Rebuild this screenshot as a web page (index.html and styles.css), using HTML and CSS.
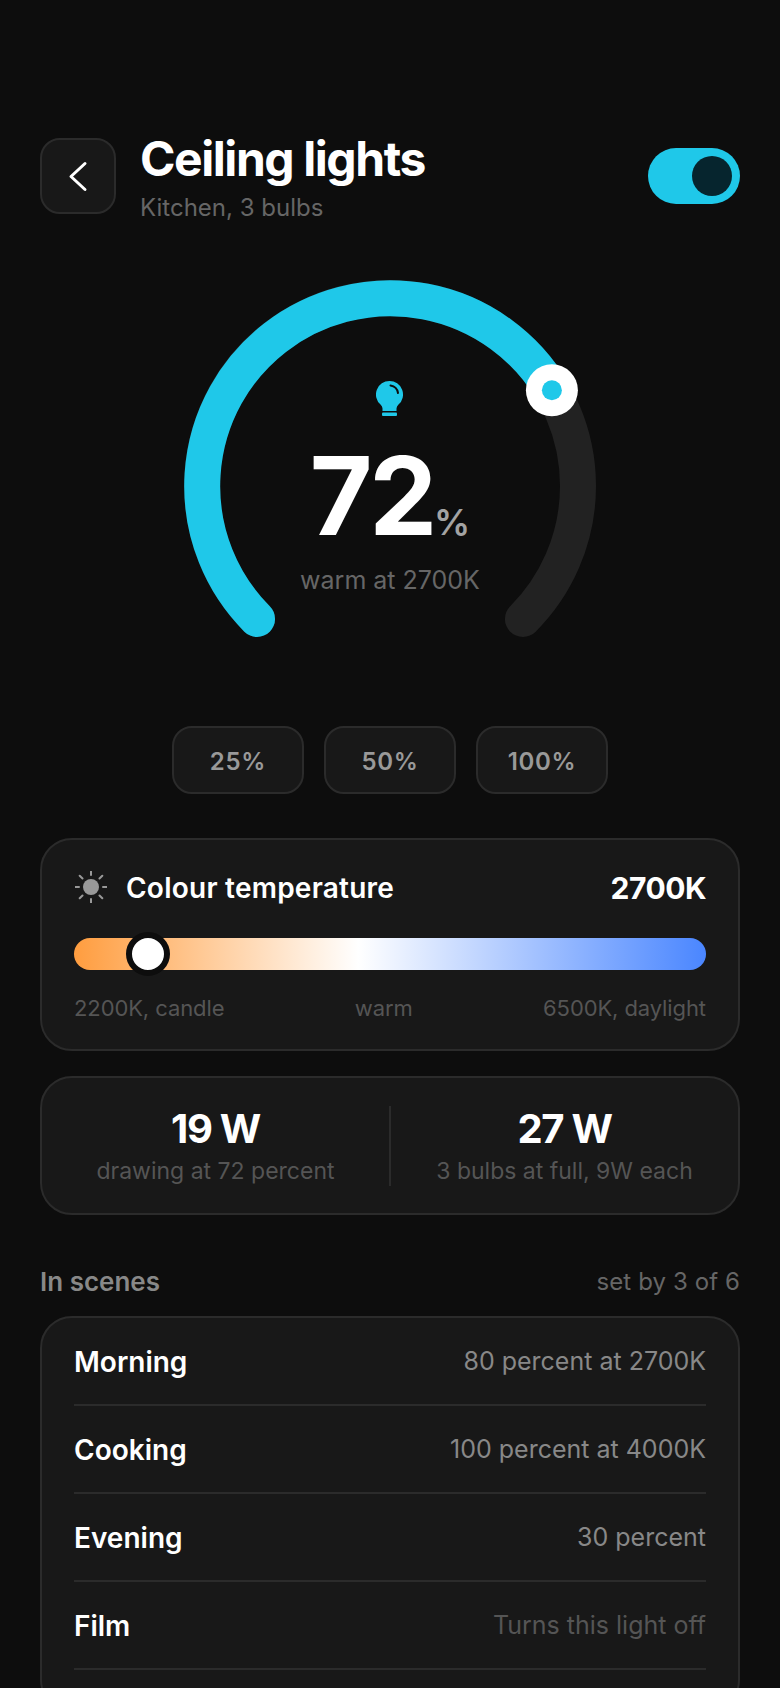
FILE: index.html
```html
<!DOCTYPE html>
<html lang="en">
<head>
<meta charset="utf-8">
<title>Ceiling lights</title>
<link rel="stylesheet" href="styles.css">
</head>
<body>
<main class="screen">
  <header class="header">
    <button class="back" aria-label="Back">
      <svg class="back-icon" viewBox="0 0 32 32"><polyline points="23,3.5 9,16.5 23,29.5"/></svg>
    </button>
    <div class="heading">
      <h1 class="title">Ceiling lights</h1>
      <p class="subtitle">Kitchen, 3 bulbs</p>
    </div>
    <div class="toggle"><span class="toggle-knob"></span></div>
  </header>

  <section class="gauge">
    <svg class="gauge-svg" viewBox="0 0 440 380">
      <path class="arc-track" d="M87.06 348.94A188 188 0 1 1 352.94 348.94"/>
      <path class="arc-value" d="M87.06 348.94A188 188 0 1 1 381.9 120.3"/>
      <circle class="knob-ring" cx="381.9" cy="120.3" r="26"/>
      <circle class="knob-dot" cx="381.9" cy="120.3" r="10"/>
    </svg>
    <div class="gauge-center">
      <svg class="bulb" viewBox="0 0 28 36">
        <path class="bulb-body" d="M13.5 0A13.5 13.5 0 0 1 22.5 23.6Q20.5 25.5 20.5 27.5V30H6.5V27.5Q6.5 25.5 4.5 23.6A13.5 13.5 0 0 1 13.5 0Z"/>
        <rect class="bulb-body" x="6" y="31.5" width="15" height="3.5" rx="1"/>
        <path class="bulb-shine" d="M14.5 4.5A9 9 0 0 1 22 12"/>
      </svg>
      <div class="reading"><span class="reading-num">72</span><span class="reading-unit">%</span></div>
      <p class="reading-note">warm at 2700K</p>
    </div>
  </section>

  <div class="chips">
    <button class="chip">25%</button>
    <button class="chip">50%</button>
    <button class="chip">100%</button>
  </div>

  <section class="card temp">
    <div class="temp-head">
      <svg class="sun" viewBox="0 0 32 32">
        <circle class="sun-core" cx="16" cy="16" r="8"/>
        <path class="sun-rays" d="M16 0V4M16 28V32M0 16H4M28 16H32M4.7 4.7L7.5 7.5M24.5 24.5L27.3 27.3M27.3 4.7L24.5 7.5M7.5 24.5L4.7 27.3"/>
      </svg>
      <h2 class="temp-title">Colour temperature</h2>
      <span class="temp-value">2700K</span>
    </div>
    <div class="temp-track"><span class="temp-handle"></span></div>
    <div class="temp-labels"><span>2200K, candle</span><span>warm</span><span>6500K, daylight</span></div>
  </section>

  <section class="card stats">
    <div class="stat"><div class="stat-value">19 W</div><div class="stat-note">drawing at 72 percent</div></div>
    <div class="stat-rule"></div>
    <div class="stat"><div class="stat-value">27 W</div><div class="stat-note">3 bulbs at full, 9W each</div></div>
  </section>

  <div class="section-head"><h2 class="section-title">In scenes</h2><span class="section-note">set by 3 of 6</span></div>
  <section class="card scenes">
    <div class="scene"><span class="scene-name">Morning</span><span class="scene-value">80 percent at 2700K</span></div>
    <div class="scene"><span class="scene-name">Cooking</span><span class="scene-value">100 percent at 4000K</span></div>
    <div class="scene"><span class="scene-name">Evening</span><span class="scene-value">30 percent</span></div>
    <div class="scene"><span class="scene-name">Film</span><span class="scene-value scene-value-off">Turns this light off</span></div>
  </section>
</main>
</body>
</html>
```
FILE: styles.css
```css
* { box-sizing: border-box; }
html, body { margin: 0; padding: 0; background: #0d0d0d; }
body { font-family: Inter, "Liberation Sans", sans-serif; color: #fff; }
h1, h2, p { margin: 0; }
button { font-family: inherit; }

.screen { width: 780px; height: 1688px; overflow: hidden; padding: 138px 40px 0; }

.header { display: flex; align-items: flex-start; height: 132px; }
.back { width: 76px; height: 76px; flex: none; padding: 0; display: flex; align-items: center; justify-content: center; background: #181818; border: 2px solid #2b2b2b; border-radius: 20px; }
.back-icon { width: 32px; height: 32px; fill: none; stroke: #fff; stroke-width: 3; stroke-linecap: round; stroke-linejoin: round; }
.heading { margin-left: 24px; flex: 1; margin-top: -7px; }
.title { font-size: 48px; line-height: 56px; font-weight: 700; letter-spacing: -1.44px; }
.subtitle { font-size: 24px; line-height: 34px; color: #666; margin-top: 4px; }
.toggle { width: 92px; height: 56px; margin-top: 10px; border-radius: 28px; background: #1fc8e9; display: flex; align-items: center; justify-content: flex-end; padding-right: 8px; }
.toggle-knob { width: 40px; height: 40px; border-radius: 50%; background: #06252e; }

.gauge { position: relative; width: 440px; height: 380px; margin: 0 auto; }
.gauge-svg { display: block; width: 440px; height: 380px; fill: none; }
.arc-track { stroke: #222; stroke-width: 36; stroke-linecap: round; }
.arc-value { stroke: #1fc8e9; stroke-width: 36; stroke-linecap: round; }
.knob-ring { fill: #fff; }
.knob-dot { fill: #1fc8e9; }
.gauge-center { position: absolute; left: 0; right: 0; top: 111px; display: flex; flex-direction: column; align-items: center; }
.bulb { width: 28px; height: 36px; display: block; }
.bulb-body { fill: #1fc8e9; }
.bulb-shine { fill: none; stroke: #0d0d0d; stroke-width: 2; stroke-linecap: round; }
.reading { display: flex; align-items: baseline; margin-top: 19px; height: 120px; line-height: 120px; }
.reading-num { font-size: 108px; font-weight: 700; letter-spacing: -3.24px; }
.reading-unit { font-size: 36px; font-weight: 600; color: #a3a3a3; }
.reading-note { font-size: 25px; line-height: 34px; color: #666; margin-top: 7px; }

.chips { display: flex; justify-content: center; gap: 20px; margin-top: 76px; }
.chip { width: 132px; height: 68px; padding: 2px 0 0; background: #181818; border: 2px solid #2b2b2b; border-radius: 20px; color: #999; font-size: 24px; font-weight: 600; letter-spacing: 0.7px; }

.card { background: #181818; border: 2px solid #2b2b2b; border-radius: 32px; }
.temp { margin-top: 44px; height: 213px; padding: 28px 32px 0; }
.temp-head { display: flex; align-items: center; height: 40px; }
.sun { width: 32px; height: 32px; flex: none; margin-left: 1px; margin-top: -2px; }
.sun-core { fill: #999; }
.sun-rays { fill: none; stroke: #999; stroke-width: 2; stroke-linecap: round; }
.temp-title { font-size: 28px; font-weight: 600; letter-spacing: 0.24px; margin-left: 19px; flex: 1; }
.temp-value { font-size: 30px; font-weight: 700; letter-spacing: -0.5px; }
.temp-track { position: relative; height: 32px; margin-top: 30px; border-radius: 16px; background: linear-gradient(90deg, #ff9d3f 0%, #fff 45%, #4a86ff 100%); }
.temp-handle { position: absolute; left: 52px; top: -6px; width: 44px; height: 44px; border-radius: 50%; background: #fff; border: 6px solid #0d0d0d; }
.temp-labels { display: flex; justify-content: space-between; margin-top: 22px; font-size: 22px; line-height: 32px; color: #555; letter-spacing: -0.1px; }

.stats { margin-top: 25px; height: 139px; display: flex; align-items: center; }
.stat { flex: 1; text-align: center; }
.stat-value { font-size: 40px; line-height: 48px; padding-top: 1px; font-weight: 700; letter-spacing: -1.3px; }
.stat-note { font-size: 23px; line-height: 34px; color: #555; margin-top: 1px; }
.stat-rule { width: 2px; height: 80px; background: #2b2b2b; flex: none; }

.section-head { display: flex; justify-content: space-between; align-items: center; margin-top: 48px; height: 36px; }
.section-title { font-size: 26px; font-weight: 600; color: #888; }
.section-note { font-size: 24px; color: #666; letter-spacing: 0.1px; }

.scenes { margin-top: 17px; padding: 0 32px 40px; }
.scene { display: flex; justify-content: space-between; align-items: center; height: 88px; border-bottom: 2px solid #2b2b2b; }
.scene-name { font-size: 28px; font-weight: 600; padding-top: 2px; }
.scene-value { font-size: 25px; color: #888; }
.scene-value-off { color: #555; }
```
